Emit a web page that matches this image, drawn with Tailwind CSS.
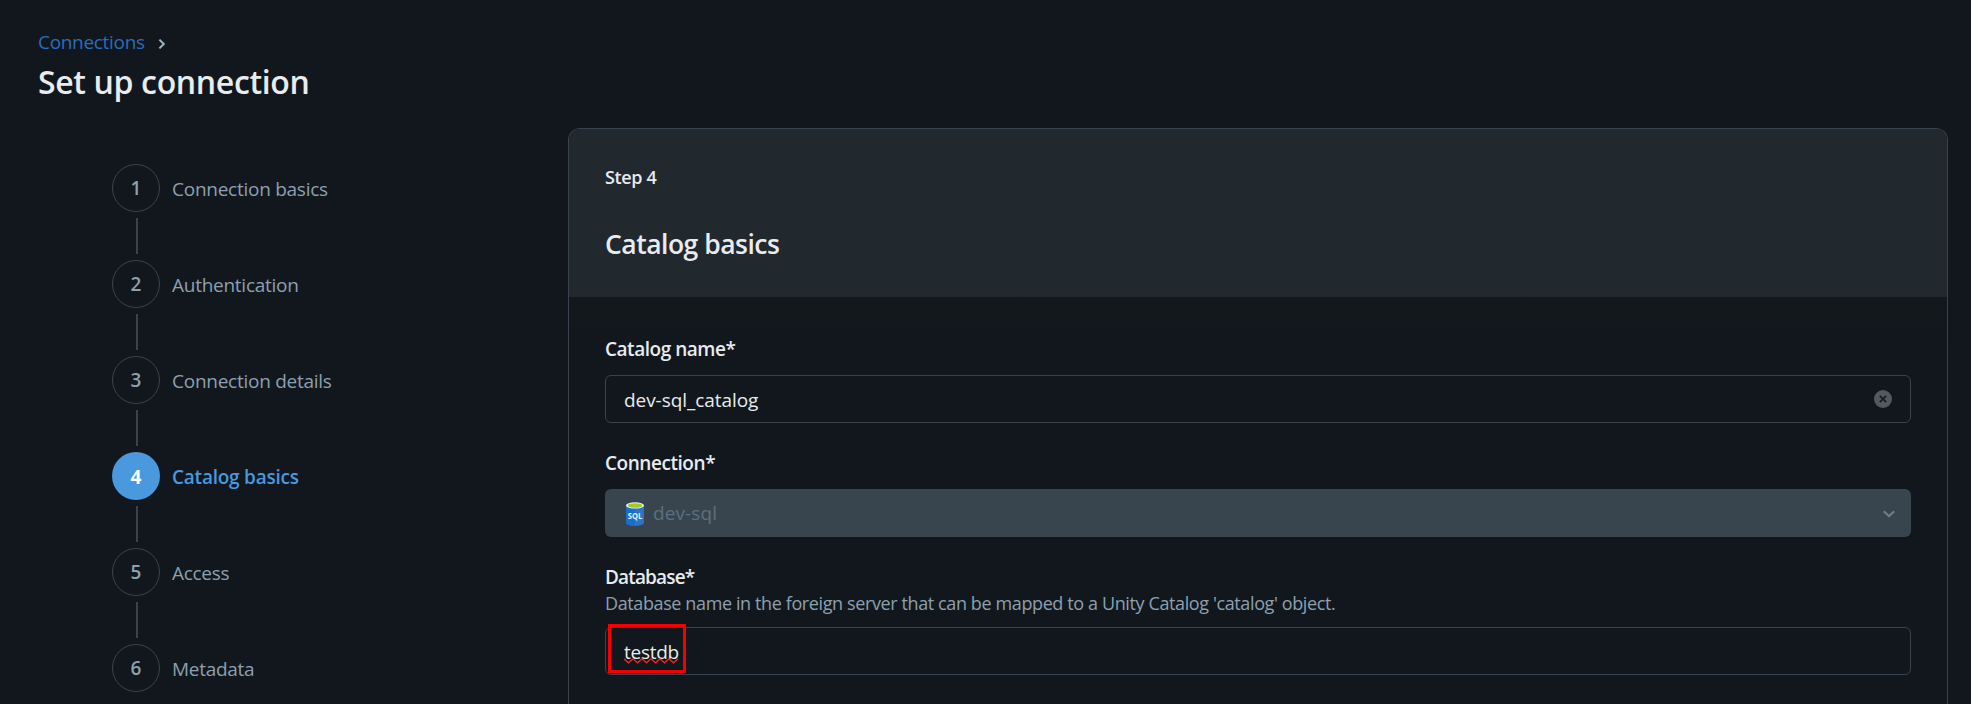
<!DOCTYPE html>
<html lang="en">
<head>
<meta charset="utf-8">
<title>Set up connection</title>
<script src="https://cdn.jsdelivr.net/npm/@tailwindcss/browser@4"></script>
</head>
<body class="h-screen overflow-hidden bg-[#11171d] text-[#e8ecf0] font-['Open_Sans','Noto_Sans',sans-serif] text-[19px]">
<header class="pt-[27px] pl-[38px]">
  <nav class="flex h-[30px] items-center">
    <a class="leading-[30px] tracking-[-0.31px] text-[#296dbd]">Connections</a>
    <svg class="ml-[12px] mt-[3px] size-3" viewBox="0 0 12 12" fill="none" stroke="#a3b3c0" stroke-width="2"><path d="M2.4 1.6 6.8 6 2.4 10.4"/></svg>
  </nav>
  <h1 class="mt-[5px] h-10 text-[32px] font-semibold leading-10 tracking-[-0.35px]">Set up connection</h1>
</header>
<main class="flex items-start">
  <ol class="w-[568px] shrink-0 pl-[112px] pt-[62px] text-[#8da0b0]">
    <li>
      <div class="flex items-center"><span class="flex size-12 items-center justify-center rounded-full border border-[#37444f] pt-px font-semibold">1</span><span class="ml-[12px] pt-0.5 tracking-[-0.26px]">Connection basics</span></div>
      <div class="my-1.5 ml-6 h-9 w-0.5 bg-[#37444f]"></div>
    </li>
    <li>
      <div class="flex items-center"><span class="flex size-12 items-center justify-center rounded-full border border-[#37444f] pt-px font-semibold">2</span><span class="ml-[12px] pt-0.5 tracking-[-0.26px]">Authentication</span></div>
      <div class="my-1.5 ml-6 h-9 w-0.5 bg-[#37444f]"></div>
    </li>
    <li>
      <div class="flex items-center"><span class="flex size-12 items-center justify-center rounded-full border border-[#37444f] pt-px font-semibold">3</span><span class="ml-[12px] pt-0.5 tracking-[-0.26px]">Connection details</span></div>
      <div class="my-1.5 ml-6 h-9 w-0.5 bg-[#37444f]"></div>
    </li>
    <li>
      <div class="flex items-center"><span class="flex size-12 items-center justify-center rounded-full bg-[#4a98dd] pt-0.5 font-bold text-white">4</span><span class="ml-[12px] pt-0.5 font-semibold tracking-[-0.23px] text-[#4a98dd]">Catalog basics</span></div>
      <div class="my-1.5 ml-6 h-9 w-0.5 bg-[#37444f]"></div>
    </li>
    <li>
      <div class="flex items-center"><span class="flex size-12 items-center justify-center rounded-full border border-[#37444f] pt-px font-semibold">5</span><span class="ml-[12px] pt-0.5 tracking-[-0.3px]">Access</span></div>
      <div class="my-1.5 ml-6 h-9 w-0.5 bg-[#37444f]"></div>
    </li>
    <li>
      <div class="flex items-center"><span class="flex size-12 items-center justify-center rounded-full border border-[#37444f] pt-px font-semibold">6</span><span class="ml-[12px] pt-0.5 tracking-[-0.29px]">Metadata</span></div>
    </li>
  </ol>
  <section class="mt-[26px] h-[576px] w-[1380px] overflow-hidden rounded-t-xl border border-b-0 border-[#37444f]">
    <div class="h-[168px] bg-[#21282e] px-9 pt-9">
      <p class="h-6 text-[18px] font-semibold leading-6 tracking-[-0.35px]">Step 4</p>
      <h2 class="mt-[37px] h-9 text-[26.5px] font-semibold leading-9 tracking-[-0.5px]">Catalog basics</h2>
    </div>
    <form class="bg-linear-to-b from-[#12181b] to-[#11171d] to-[70px] px-9 pt-[38px]">
      <label class="block h-7 font-semibold leading-7 tracking-[-0.47px]">Catalog name*</label>
      <div class="mt-3 flex h-12 items-center justify-between rounded-md border border-[#37444f] pl-[18px] pr-[18px]">
        <span class="pt-0.5 tracking-[-0.06px]">dev-sql_catalog</span>
        <svg class="size-[18px]" viewBox="0 0 18 18"><circle cx="9" cy="9" r="9" fill="#55585c"/><path d="M5.8 5.8 12.2 12.2M12.2 5.8 5.8 12.2" stroke="#161c22" stroke-width="1.7"/></svg>
      </div>
      <label class="mt-[26px] block h-7 font-semibold leading-7 tracking-[-0.45px]">Connection*</label>
      <div class="mt-3 flex h-12 items-center rounded-md bg-[#39454e] pl-[21px] pr-4 text-[#5c6f80]">
        <svg class="mt-0.5 h-6 w-[18px]" viewBox="0 0 18 24">
          <path d="M0 3.4V20.6C0 22.5 4 24 9 24s9-1.5 9-3.4V3.4Z" fill="#2a74c9"/>
          <path d="M0 3.4V20.6C0 22.5 4 24 9 24V3.4Z" fill="#166fcb"/>
          <ellipse cx="9" cy="3.4" rx="9" ry="3.2" fill="#f0f4ec"/>
          <ellipse cx="9" cy="3.5" rx="7.2" ry="2.3" fill="#a4ca25"/>
          <text x="9" y="17.2" text-anchor="middle" textLength="14.5" lengthAdjust="spacingAndGlyphs" font-size="8.6" font-weight="700" fill="#e9f1fa">SQL</text>
        </svg>
        <span class="ml-[9px] pt-px tracking-[0.1px]">dev-sql</span>
        <svg class="ml-auto mt-0.5 h-2 w-3" viewBox="0 0 12 8" fill="none" stroke="#6c8192" stroke-width="2"><path d="M.8 1.2 6 6.2 11.2 1.2"/></svg>
      </div>
      <label class="mt-[26px] block h-7 font-semibold leading-7 tracking-[-0.85px]">Database*</label>
      <p class="h-6 text-[18px] leading-6 tracking-[-0.387px] text-[#8da0b0]">Database name in the foreign server that can be mapped to a Unity Catalog 'catalog' object.</p>
      <div class="relative mt-3 flex h-12 items-center rounded-md border border-[#37444f] pl-[18px]">
        <span class="relative pt-0.5 tracking-[-0.28px]">testdb
          <svg class="absolute left-0 top-[22px] h-[6px] w-[55px]" viewBox="0 0 55 6" fill="none" stroke="#f0281e" stroke-width="1.3"><path d="M0 .8 4.5 4.8 9 .8 13.5 4.8 18 .8 22.5 4.8 27 .8 31.5 4.8 36 .8 40.5 4.8 45 .8 49.5 4.8 54 .8"/></svg>
        </span>
        <div class="absolute left-[2px] top-[-4px] h-[49px] w-[78px] border-3 border-[#f40000]"></div>
      </div>
    </form>
  </section>
</main>
</body>
</html>
